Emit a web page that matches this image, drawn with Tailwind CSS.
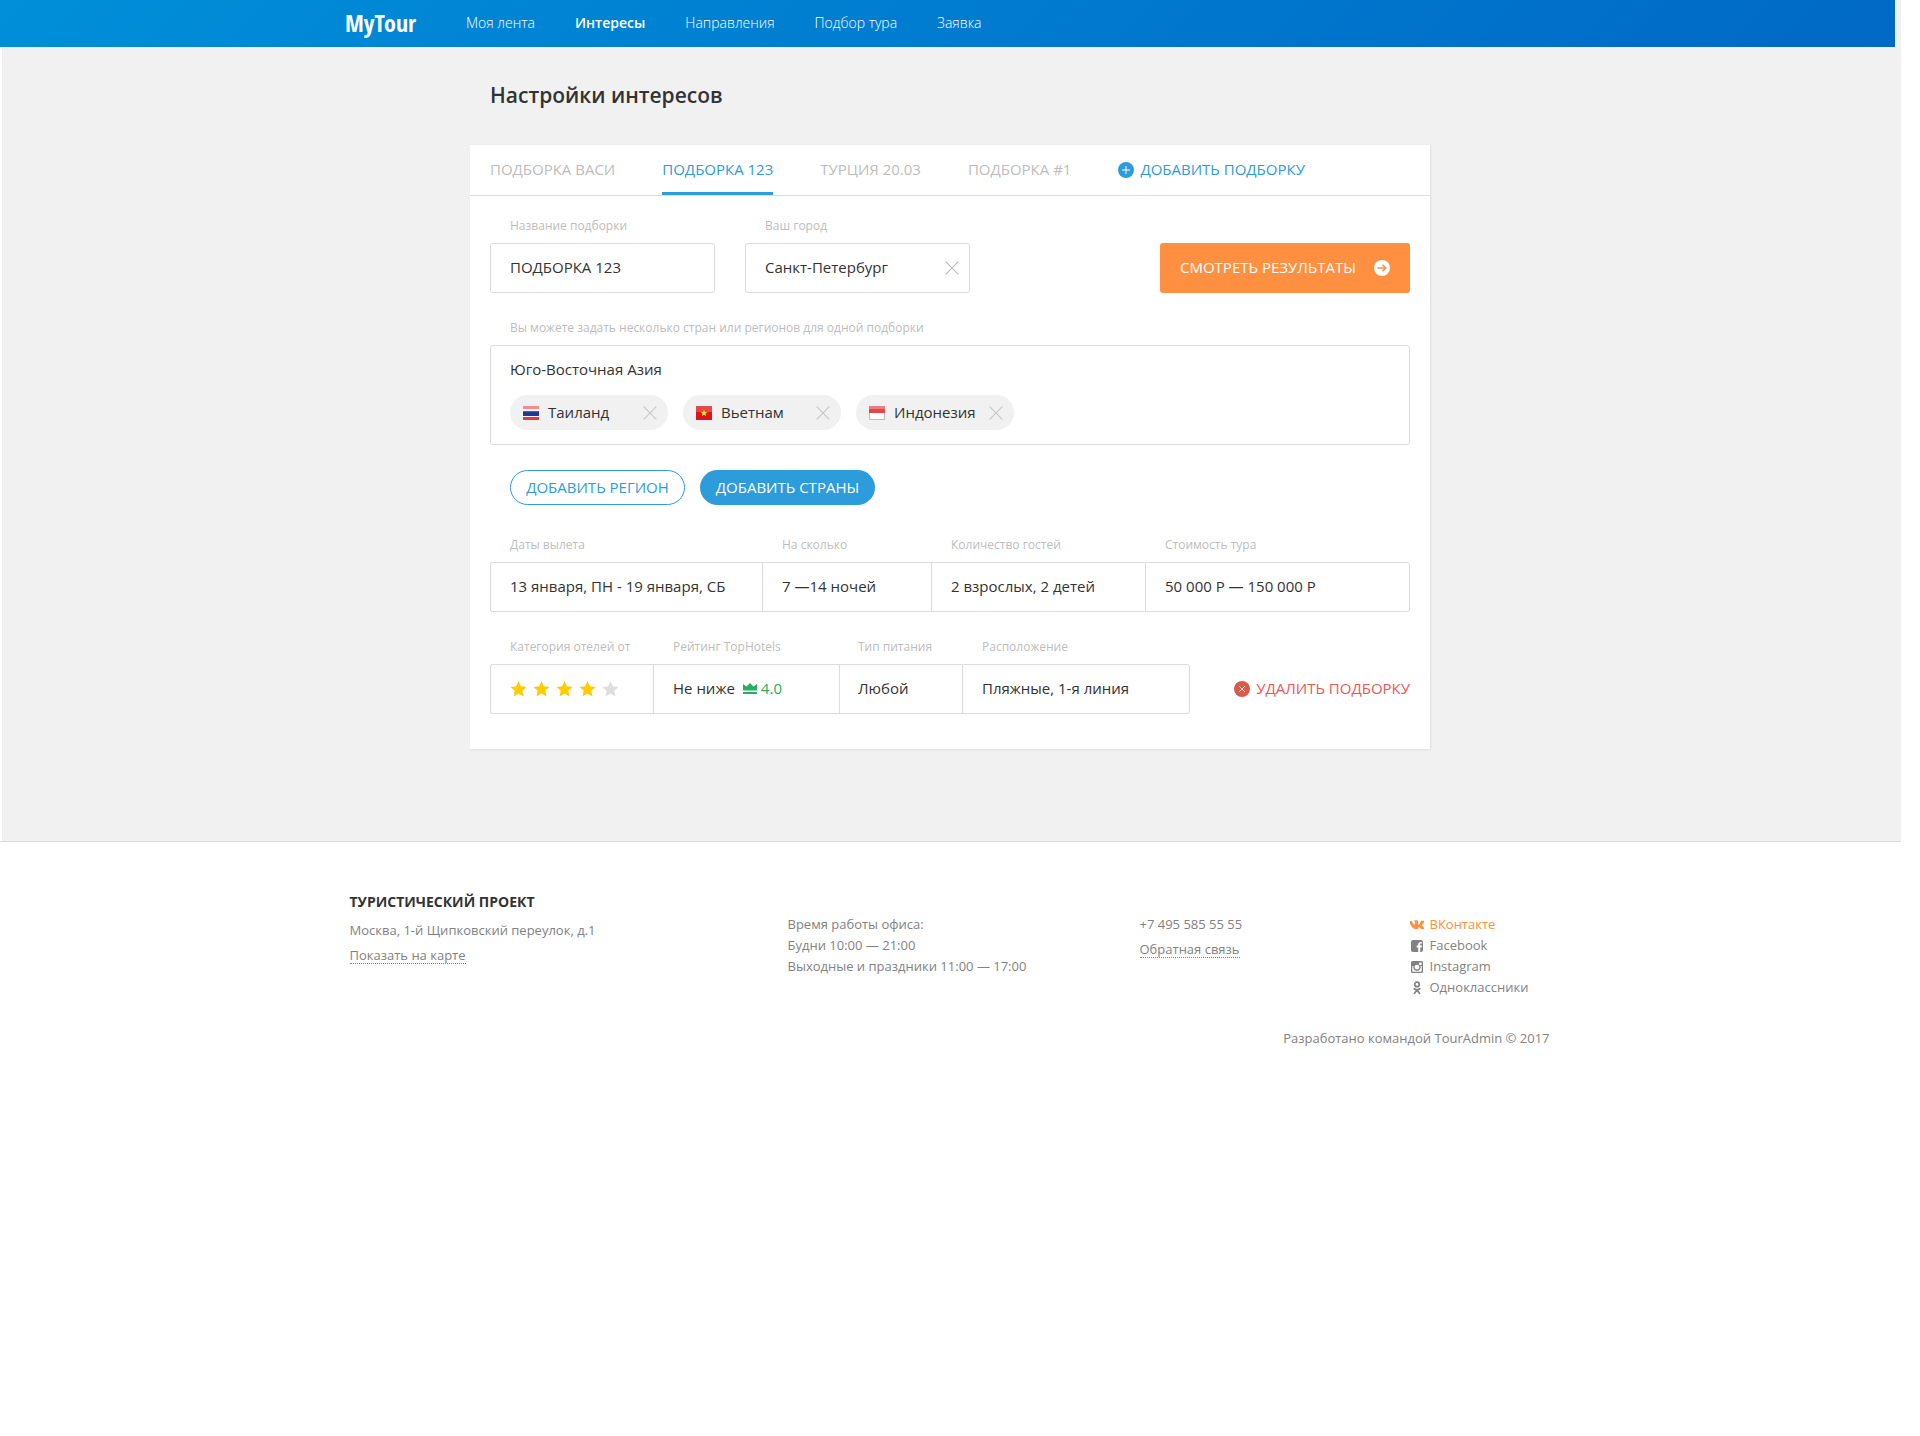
<!DOCTYPE html>
<html lang="ru">
<head>
<meta charset="utf-8">
<meta name="viewport" content="width=device-width, initial-scale=1">
<title>MyTour — Настройки интересов</title>
<script src="https://cdn.jsdelivr.net/npm/@tailwindcss/browser@4"></script>
</head>
<body class="bg-white font-['Open_Sans',sans-serif] text-[#333]">
<svg class="hidden" aria-hidden="true">
  <symbol id="cross" viewBox="0 0 14 14"><path d="M.7.7l12.600 12.600M13.300.7L.7 13.300" fill="none" stroke="currentColor" stroke-width="1.200"/></symbol>
  <symbol id="star" viewBox="0 0 17 16"><path d="M8.500 0l2.300 5.300 5.700.6-4.200 3.900 1.200 5.700-5-2.900-5 2.900 1.200-5.700L.5 5.900l5.700-.6z" fill="currentColor"/></symbol>
</svg>

<div class="mr-[19px]">
  <div class="border-b border-[#dcdcdc] pl-[2px] bg-[#f1f1f1] bg-clip-content">
    <header class="-ml-[2px] mr-[6px] h-[47px] bg-[linear-gradient(135deg,#008fd9,#0069c6)]">
      <div class="mx-auto flex h-[45px] max-w-[1205px] items-center">
        <a href="#" class="w-[121px] font-['Open_Sans_Condensed','Noto_Sans_ExtraCondensed','Noto_Sans_Condensed','Roboto_Condensed','Roboto',sans-serif] text-[24px] font-bold leading-[45px] text-white">MyTour</a>
        <nav class="flex gap-10 text-[14px] font-light text-white">
          <a href="#">Моя лента</a>
          <a href="#" class="font-semibold">Интересы</a>
          <a href="#">Направления</a>
          <a href="#">Подбор тура</a>
          <a href="#">Заявка</a>
        </nav>
      </div>
    </header>

    <main class="mx-auto max-w-[963px] pb-[92px] pr-[3px]">
      <h1 class="px-5 pb-[34px] pt-8 text-[21px] font-semibold leading-8">Настройки интересов</h1>

      <section class="bg-white pb-[35px] shadow-[1px_1px_2px_rgba(0,0,0,0.08)]">
        <nav class="flex h-[51px] gap-[47px] border-b border-[#dcdcdc] px-5 text-[15px] text-[#bdbdbd]">
          <a href="#" class="flex items-center pb-px">ПОДБОРКА ВАСИ</a>
          <a href="#" aria-current="page" class="flex items-center border-b-3 border-[#2d9cdb] pt-[2px] text-[#2d9cdb]">ПОДБОРКА 123</a>
          <a href="#" class="flex items-center pb-px">ТУРЦИЯ 20.03</a>
          <a href="#" class="flex items-center pb-px">ПОДБОРКА #1</a>
          <a href="#" class="flex items-center gap-[6px] text-[#2d9cdb]">
            <svg class="size-4" viewBox="0 0 16 16"><circle cx="8" cy="8" r="8" fill="#2d9cdb"/><path d="M8 4v8M4 8h8" stroke="#fff" stroke-width="1"/></svg>
            <span class="pb-px">ДОБАВИТЬ ПОДБОРКУ</span>
          </a>
        </nav>

        <form class="px-5 pt-5" onsubmit="return false">
          <div class="flex items-end gap-[30px]">
            <div class="w-[225px]">
              <label for="name" class="block px-5 pb-[7px] text-[12px] leading-5 text-[#bdbdbd]">Название подборки</label>
              <input id="name" type="text" value="ПОДБОРКА 123" class="block h-[50px] w-full rounded-[3px] border border-[#dcdcdc] px-[19px] pb-[2px] text-[15px] outline-none">
            </div>
            <div class="w-[225px]">
              <label for="city" class="block px-5 pb-[7px] text-[12px] leading-5 text-[#bdbdbd]">Ваш город</label>
              <div class="flex h-[50px] items-center rounded-[3px] border border-[#dcdcdc] pl-[19px] pr-[10px]">
                <input id="city" type="text" value="Санкт-Петербург" class="min-w-0 flex-1 pb-[2px] text-[15px] outline-none">
                <button type="button" aria-label="Очистить" class="text-[#bdbdbd]"><svg class="size-[14px]"><use href="#cross"/></svg></button>
              </div>
            </div>
            <button type="submit" class="ml-auto flex h-[50px] w-[250px] items-center justify-between rounded-[3px] bg-[#ff9041] px-5 text-[15px] text-white">
              <span class="pb-[2px]">СМОТРЕТЬ РЕЗУЛЬТАТЫ</span>
              <svg class="size-4" viewBox="0 0 16 16"><circle cx="8" cy="8" r="8" fill="#fff"/><path d="M3.500 8h8M8.500 4.800L11.700 8l-3.200 3.200" fill="none" stroke="#ff9041" stroke-width="1.600"/></svg>
            </button>
          </div>

          <p class="px-5 pb-[7px] pt-[25px] text-[12px] leading-5 text-[#bdbdbd]">Вы можете задать несколько стран или регионов для одной подборки</p>
          <div class="h-[100px] rounded-[3px] border border-[#dcdcdc] px-[19px] pt-3">
            <p class="text-[15px] leading-[22px]">Юго-Восточная Азия</p>
            <ul class="mt-[15px] flex gap-[15px] text-[15px]">
              <li class="flex h-[35px] w-[158px] items-center rounded-full bg-[#f1f1f1] pl-[13px] pr-[11px]">
                <svg class="mr-[9px] h-[14px] w-4" viewBox="0 0 16 14"><rect width="16" height="14" fill="#f5f5f5"/><rect width="16" height="3" fill="#f68b8b"/><rect y="5" width="16" height="5" fill="#1d3a93"/><rect y="5" width="16" height="1" fill="#4a63ab"/><rect y="11" width="16" height="3" fill="#e3393c"/></svg>
                <span class="flex-1">Таиланд</span>
                <button type="button" aria-label="Убрать Таиланд" class="text-[#c8c8c8]"><svg class="size-[14px]"><use href="#cross"/></svg></button>
              </li>
              <li class="flex h-[35px] w-[158px] items-center rounded-full bg-[#f1f1f1] pl-[13px] pr-[11px]">
                <svg class="mr-[9px] h-[14px] w-4" viewBox="0 0 16 14"><rect width="16" height="14" fill="#dd1418"/><rect width="16" height="6" fill="#e04a4c"/><path d="M8 3.800l.9 2.300 2.400.1-1.900 1.500.7 2.400L8 8.700l-2.100 1.400.7-2.400-1.900-1.500 2.400-.1z" fill="#ffee16"/></svg>
                <span class="flex-1">Вьетнам</span>
                <button type="button" aria-label="Убрать Вьетнам" class="text-[#c8c8c8]"><svg class="size-[14px]"><use href="#cross"/></svg></button>
              </li>
              <li class="flex h-[35px] w-[158px] items-center rounded-full bg-[#f1f1f1] pl-[13px] pr-[11px]">
                <svg class="mr-[9px] h-[14px] w-4" viewBox="0 0 16 14"><rect width="16" height="14" fill="#bcbcbc"/><rect x="1" y="7" width="14" height="6" fill="#fff"/><rect width="16" height="7" fill="#e2474a"/><rect width="16" height="3" fill="#ec7d80"/></svg>
                <span class="flex-1">Индонезия</span>
                <button type="button" aria-label="Убрать Индонезия" class="text-[#c8c8c8]"><svg class="size-[14px]"><use href="#cross"/></svg></button>
              </li>
            </ul>
          </div>

          <div class="flex gap-[15px] px-5 pt-[25px] text-[15px]">
            <button type="button" class="h-[35px] w-[175px] rounded-full border border-[#2d9cdb] text-[#2d9cdb]">ДОБАВИТЬ РЕГИОН</button>
            <button type="button" class="h-[35px] w-[175px] rounded-full bg-[#2d9cdb] text-white">ДОБАВИТЬ СТРАНЫ</button>
          </div>

          <div class="flex pt-[30px]">
            <div class="w-[272px]">
              <label for="dates" class="block px-5 pb-[7px] text-[12px] leading-5 text-[#bdbdbd]">Даты вылета</label>
              <input id="dates" type="text" value="13 января, ПН - 19 января, СБ" class="block h-[50px] w-full rounded-l-[3px] border-y border-l border-[#dcdcdc] pb-[2px] pl-[19px] text-[15px] outline-none">
            </div>
            <div class="w-[169px]">
              <label for="nights" class="block px-5 pb-[7px] text-[12px] leading-5 text-[#bdbdbd]">На сколько</label>
              <input id="nights" type="text" value="7 —14 ночей" class="block h-[50px] w-full border-y border-l border-[#dcdcdc] pb-[2px] pl-[19px] text-[15px] outline-none">
            </div>
            <div class="w-[214px]">
              <label for="guests" class="block px-5 pb-[7px] text-[12px] leading-5 text-[#bdbdbd]">Количество гостей</label>
              <input id="guests" type="text" value="2 взрослых, 2 детей" class="block h-[50px] w-full border-y border-l border-[#dcdcdc] pb-[2px] pl-[19px] text-[15px] outline-none">
            </div>
            <div class="flex-1">
              <label for="price" class="block px-5 pb-[7px] text-[12px] leading-5 text-[#bdbdbd]">Стоимость тура</label>
              <input id="price" type="text" value="50 000 Р — 150 000 Р" class="block h-[50px] w-full rounded-r-[3px] border border-[#dcdcdc] pb-[2px] pl-[19px] text-[15px] outline-none">
            </div>
          </div>

          <div class="flex items-end pt-[25px]">
            <div class="w-[163px]">
              <p id="stars" class="px-5 pb-[7px] text-[12px] leading-5 text-[#bdbdbd]">Категория отелей от</p>
              <button type="button" aria-labelledby="stars" class="flex h-[50px] w-full items-center gap-[6px] rounded-l-[3px] border-y border-l border-[#dcdcdc] pl-[19px] text-[#ffcc00]">
                <svg class="h-4 w-[17px]"><use href="#star"/></svg>
                <svg class="h-4 w-[17px]"><use href="#star"/></svg>
                <svg class="h-4 w-[17px]"><use href="#star"/></svg>
                <svg class="h-4 w-[17px]"><use href="#star"/></svg>
                <svg class="h-4 w-[17px] text-[#dedede]"><use href="#star"/></svg>
              </button>
            </div>
            <div class="w-[186px]">
              <p id="rating" class="px-5 pb-[7px] text-[12px] leading-5 text-[#bdbdbd]">Рейтинг TopHotels</p>
              <button type="button" aria-labelledby="rating" class="flex h-[50px] w-full items-center border-y border-l border-[#dcdcdc] pb-[2px] pl-[19px] text-[15px]">
                Не ниже
                <svg class="ml-2 mr-1 h-[11px] w-[14px]" viewBox="0 0 14 11" fill="#27ae60"><path d="M0 1l3.500 2.500L7 0l3.500 3.500L14 1v6.500H0z"/><path d="M0 9h14v2H0z"/></svg>
                <span class="text-[#27ae60]">4.0</span>
              </button>
            </div>
            <div class="w-[123px]">
              <label for="meal" class="block px-[19px] pb-[7px] text-[12px] leading-5 text-[#bdbdbd]">Тип питания</label>
              <input id="meal" type="text" value="Любой" class="block h-[50px] w-full border-y border-l border-[#dcdcdc] pb-[2px] pl-[18px] text-[15px] outline-none">
            </div>
            <div class="w-[228px]">
              <label for="place" class="block px-5 pb-[7px] text-[12px] leading-5 text-[#bdbdbd]">Расположение</label>
              <input id="place" type="text" value="Пляжные, 1-я линия" class="block h-[50px] w-full rounded-r-[3px] border border-[#dcdcdc] pb-[2px] pl-[19px] text-[15px] outline-none">
            </div>
            <button type="button" class="ml-auto flex h-[50px] items-center gap-[6px] whitespace-nowrap text-[15px] text-[#eb5757]">
              <svg class="size-4" viewBox="0 0 16 16"><circle cx="8" cy="8" r="8" fill="#d75a4a"/><path d="M5 5l6 6M11 5l-6 6" stroke="#fff" stroke-width=".8"/></svg>
              <span class="pb-[2px]">УДАЛИТЬ ПОДБОРКУ</span>
            </button>
          </div>
        </form>
      </section>
    </main>
  </div>

  <footer class="mx-auto max-w-[1202px] pr-[2px] pt-[49px] text-[13px] leading-[21px] text-[#828282]">
    <div class="flex">
      <div class="w-[438px]">
        <h2 class="text-[14px] font-bold text-[#333]">ТУРИСТИЧЕСКИЙ ПРОЕКТ</h2>
        <p class="mt-2">Москва, 1-й Щипковский переулок, д.1</p>
        <a href="#" class="mt-[6px] inline-block border-b border-dotted border-[#828282] leading-4">Показать на карте</a>
      </div>
      <div class="w-[352px] pt-[23px]">
        <p>Время работы офиса:</p>
        <p>Будни 10:00 — 21:00</p>
        <p>Выходные и праздники 11:00 — 17:00</p>
      </div>
      <div class="w-[270px] pt-[23px]">
        <p>+7 495 585 55 55</p>
        <a href="#" class="mt-[6px] inline-block border-b border-dotted border-[#828282] leading-4">Обратная связь</a>
      </div>
      <ul class="pt-[23px]">
        <li><a href="#" class="flex items-center gap-[6px] text-[#ff9041]">
          <svg class="size-[14px]" viewBox="0 0 24 24" fill="currentColor"><path d="M11.700 19.100h1.500s.4 0 .7-.4c.2-.2.2-.7.2-.7s0-2.100.9-2.400c1-.3 2.200 2 3.500 2.900 1 .7 1.700.5 1.700.5l3.500 0s1.800-.1 1-1.500c-.1-.1-.5-1-2.600-3-2.200-2.100-1.900-1.700.7-5.300 1.600-2.100 2.300-3.400 2.100-4-.2-.5-1.400-.4-1.400-.4l-3.900 0s-.3 0-.5.100c-.2.1-.4.400-.4.400s-.6 1.700-1.500 3.100c-1.800 3-2.500 3.200-2.800 3-.7-.4-.5-1.800-.5-2.700 0-3 .5-4.200-.9-4.500-.5-.1-.8-.2-2-.2-1.500 0-2.800 0-3.500.4-.5.2-.9.8-.6.8.3 0 .9.2 1.200.6.4.600.4 1.900.4 1.900s.2 3.600-.6 4c-.5.3-1.300-.3-2.900-3C4.100 7.500 3.500 5.900 3.500 5.900s-.1-.3-.4-.5c-.3-.2-.7-.3-.7-.3l-3.700 0s-.6 0-.8.3c-.2.2 0 .7 0 .7s2.900 6.800 6.200 10.200c3 3.200 6.500 2.800 7.600 2.800z"/></svg>ВКонтакте</a></li>
        <li><a href="#" class="flex items-center gap-[6px]">
          <svg class="size-[14px]" viewBox="0 0 14 14" fill="currentColor"><path d="M3 1h8a2 2 0 012 2v8a2 2 0 01-2 2h-.8V8.400h1.500l.3-1.800h-1.800V5.500c0-.5.200-.9.900-.9h.9V2.900H10.600C8.900 2.900 8.200 3.900 8.200 5.300v1.300H6.700v1.800h1.500V13H3a2 2 0 01-2-2V3a2 2 0 012-2z"/></svg>Facebook</a></li>
        <li><a href="#" class="flex items-center gap-[6px]">
          <svg class="size-[14px]" viewBox="0 0 14 14"><path fill="currentColor" fill-rule="evenodd" d="M2.500 1h9A1.500 1.500 0 0113 2.500v9a1.500 1.500 0 01-1.500 1.500h-9A1.500 1.500 0 011 11.500v-9A1.500 1.500 0 012.500 1zM2.300 6v5c0 .4.300.7.700.7h8c.4 0 .7-.3.700-.7V6h-1.200a3.700 3.700 0 11-7 0zm7.400-3.600a.6.600 0 00-.6.600v1.300c0 .3.300.6.600.6h1.300c.4 0 .7-.3.700-.6V3a.6.600 0 00-.7-.6zM7 4.700a2.400 2.400 0 100 4.800 2.400 2.400 0 000-4.800z"/></svg>Instagram</a></li>
        <li><a href="#" class="flex items-center gap-[6px]">
          <svg class="size-[14px]" viewBox="0 0 14 14" fill="none" stroke="currentColor" stroke-width="1.700" stroke-linecap="round"><circle cx="7" cy="3.400" r="2.300"/><path d="M4.200 7.800c1.700 1.200 3.900 1.200 5.600 0M7 9l-2.500 3.300M7 9l2.500 3.300"/></svg>Одноклассники</a></li>
      </ul>
    </div>
    <p class="mt-[30px] text-right">Разработано командой TourAdmin © 2017</p>
  </footer>
</div>
</body>
</html>
